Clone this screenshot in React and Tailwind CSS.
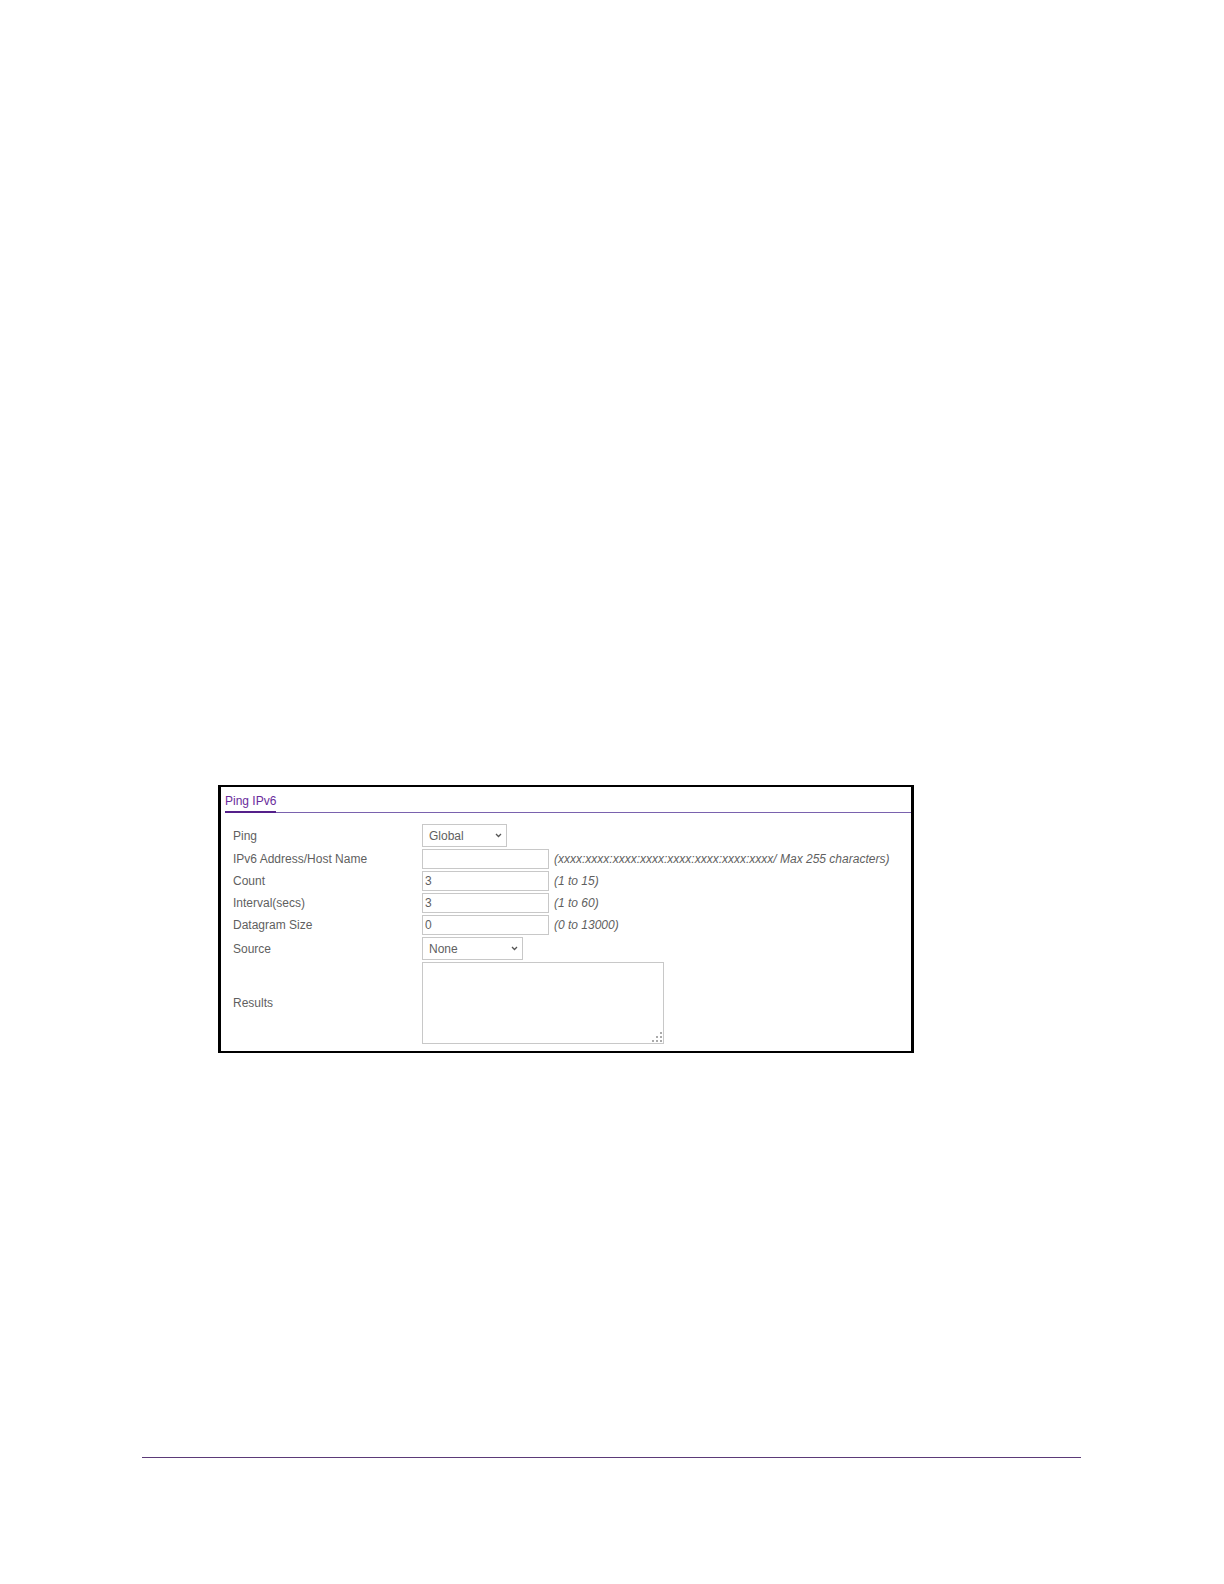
import { useState } from 'react';

const SelectField = ({ id, value, onChange, options, className }) => (
  <div className={`relative ${className}`}>
    <select
      id={id}
      value={value}
      onChange={(e) => onChange(e.target.value)}
      className="block h-[23px] w-full appearance-none border border-[#c8c8c8] bg-white pl-[6px] pr-5 text-xs text-[#5f5f5f] outline-none"
    >
      {options.map((option) => (
        <option key={option} value={option}>
          {option}
        </option>
      ))}
    </select>
    <svg
      viewBox="0 0 7 5"
      className="pointer-events-none absolute right-[5px] top-[9px] h-[5px] w-[7px]"
      fill="none"
      stroke="#555555"
      strokeWidth="1.3"
    >
      <path d="M1 1l2.5 2.5L6 1" />
    </svg>
  </div>
);

const TextField = ({ id, value, onChange, hint }) => (
  <div className="flex items-center gap-[5px]">
    <input
      id={id}
      type="text"
      value={value}
      onChange={(e) => onChange(e.target.value)}
      className="h-5 w-[127px] shrink-0 border border-[#c8c8c8] bg-white px-[2px] text-xs text-[#5f5f5f] outline-none"
    />
    <span className="italic">{hint}</span>
  </div>
);

const App = () => {
  const [form, setForm] = useState({
    ping: 'Global',
    host: '',
    count: '3',
    interval: '3',
    size: '0',
    source: 'None',
    results: ''
  });

  const update = (key) => (value) => setForm((prev) => ({ ...prev, [key]: value }));

  return (
    <div className="flex min-h-screen flex-col bg-white pb-[126px] pl-[142px] pr-[143px] pt-[785px] font-['Liberation_Sans',Arial,sans-serif] text-xs text-[#5f5f5f]">
      <main className="pl-[76px]">
        <section className="max-w-[696px] border-x-[3px] border-y-2 border-black">
          {/* Title */}
          <div className="ml-1 flex border-b border-[#7a62ae] pt-[6px]">
            <h1 className="-mb-px border-b-2 border-[#55208a] pb-[2px] leading-4 text-[#6a2c9c]">Ping IPv6</h1>
          </div>

          {/* Ping settings */}
          <form className="grid grid-cols-[189px_1fr] items-center gap-y-[2px] pb-[7px] pl-3 pt-[11px]">
            <label htmlFor="ping">Ping</label>
            <SelectField
              id="ping"
              value={form.ping}
              onChange={update('ping')}
              options={['Global', 'Link Local']}
              className="w-[85px]"
            />

            <label htmlFor="host">IPv6 Address/Host Name</label>
            <TextField
              id="host"
              value={form.host}
              onChange={update('host')}
              hint="(xxxx:xxxx:xxxx:xxxx:xxxx:xxxx:xxxx:xxxx/ Max 255 characters)"
            />

            <label htmlFor="count">Count</label>
            <TextField id="count" value={form.count} onChange={update('count')} hint="(1 to 15)" />

            <label htmlFor="interval">Interval(secs)</label>
            <TextField id="interval" value={form.interval} onChange={update('interval')} hint="(1 to 60)" />

            <label htmlFor="size">Datagram Size</label>
            <TextField id="size" value={form.size} onChange={update('size')} hint="(0 to 13000)" />

            <label htmlFor="source">Source</label>
            <SelectField
              id="source"
              value={form.source}
              onChange={update('source')}
              options={['None', 'IP Address', 'Interface']}
              className="w-[101px]"
            />

            <label htmlFor="results">Results</label>
            <div className="relative w-[242px]">
              <textarea
                id="results"
                value={form.results}
                onChange={(e) => update('results')(e.target.value)}
                className="block h-[82px] w-full resize-none border border-[#c8c8c8] bg-white p-[2px] outline-none"
              />
              {/* Resize grip */}
              <svg
                viewBox="0 0 12 12"
                className="pointer-events-none absolute bottom-px right-px h-3 w-3"
                fill="#aaaaaa"
              >
                <rect x="9" y="1" width="2" height="2" />
                <rect x="5" y="5" width="2" height="2" />
                <rect x="9" y="5" width="2" height="2" />
                <rect x="1" y="9" width="2" height="2" />
                <rect x="5" y="9" width="2" height="2" />
                <rect x="9" y="9" width="2" height="2" />
              </svg>
            </div>
          </form>
        </section>
      </main>

      <footer className="mt-auto border-t border-[#5b3a78]" />
    </div>
  );
};

export default App;
